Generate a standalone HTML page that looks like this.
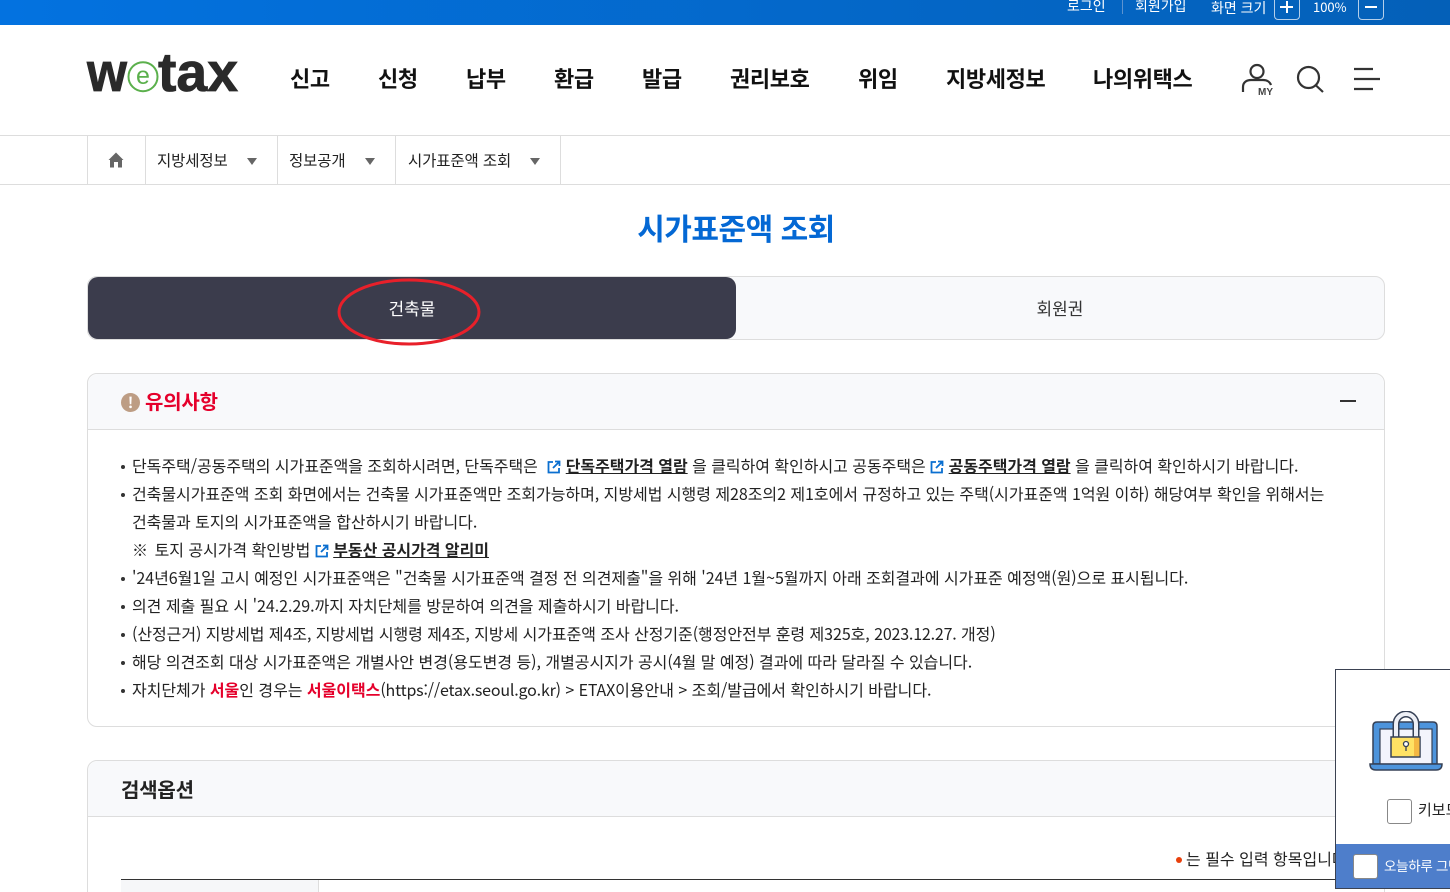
<!DOCTYPE html>
<html lang="ko"><head><meta charset="utf-8"><title>시가표준액 조회</title>
<style>
html,body{margin:0;padding:0;background:#fff;height:892px;overflow:hidden}
body{width:1450px;position:relative;font-family:"Noto Sans CJK KR","Liberation Sans",sans-serif;color:#222}
.a{position:absolute;white-space:nowrap}
.nav{top:63px;font-size:22px;line-height:30px;font-weight:700;color:#111;letter-spacing:-.35px}
.top{color:#fff;font-size:14px;line-height:16px}
.bc{top:150px;font-size:15.500px;line-height:20px;color:#222;letter-spacing:-.12px}
.tri{position:absolute;top:158px;width:0;height:0;border-left:5.500px solid transparent;border-right:5.500px solid transparent;border-top:7px solid #666}
.v{position:absolute;top:136px;height:48px;width:1px;background:#ddd}
.l{left:132px;font-size:16px;line-height:28px;color:#222;letter-spacing:-.035px}
.d{position:absolute;left:121px;width:4px;height:4px;border-radius:50%;background:#333}
b.u{text-decoration:underline;font-weight:700;color:#222}
b.r{color:#e5002b}
.n{letter-spacing:-.18px}
</style></head><body>
<div class="a" style="left:0;top:0;width:1450px;height:25px;background:linear-gradient(90deg,#0372e0,#0460b8)"></div>
<div class="a top" style="left:1067px;top:-2px">로그인</div>
<div class="a" style="left:1122px;top:0;width:1px;height:14px;background:#5d93d0"></div>
<div class="a top" style="left:1135px;top:-2px">회원가입</div>
<div class="a top" style="left:1211px;top:0">화면 크기</div>
<div class="a" style="left:1274px;top:-4px;width:24px;height:22px;border:1px solid #b5cfea;border-radius:4px"></div>
<div class="a" style="left:1280px;top:6px;width:13px;height:2px;background:#fff"></div>
<div class="a" style="left:1286px;top:1px;width:2px;height:12px;background:#fff"></div>
<div class="a top" style="left:1313px;top:-1px;font-size:13px">100%</div>
<div class="a" style="left:1358px;top:-4px;width:24px;height:22px;border:1px solid #b5cfea;border-radius:4px"></div>
<div class="a" style="left:1365px;top:6px;width:12px;height:2px;background:#fff"></div>

<svg class="a" style="left:86px;top:54px" width="154" height="40" viewBox="0 0 154 40">
<text x="1" y="37" font-family="Liberation Sans" font-weight="700" font-size="55" fill="#2a2a2a" stroke="#2a2a2a" stroke-width=".8" textLength="40" lengthAdjust="spacingAndGlyphs">w</text>
<circle cx="57" cy="22.700" r="14.500" fill="#fff" stroke="#5bb04c" stroke-width="2"/>
<text x="57" y="30" text-anchor="middle" font-family="Liberation Sans" font-size="25" fill="#5bb04c">e</text>
<text x="72" y="37" font-family="Liberation Sans" font-weight="700" font-size="55" fill="#2a2a2a" textLength="80" lengthAdjust="spacingAndGlyphs" stroke="#2a2a2a" stroke-width=".8">tax</text>
</svg>

<div class="a nav" style="left:290px">신고</div>
<div class="a nav" style="left:378px">신청</div>
<div class="a nav" style="left:466px">납부</div>
<div class="a nav" style="left:554px">환급</div>
<div class="a nav" style="left:642px">발급</div>
<div class="a nav" style="left:730px">권리보호</div>
<div class="a nav" style="left:858px">위임</div>
<div class="a nav" style="left:946px">지방세정보</div>
<div class="a nav" style="left:1093px">나의위택스</div>

<svg class="a" style="left:1238px;top:60px" width="150" height="38" viewBox="0 0 150 38" fill="none" stroke="#333" stroke-width="2.200">
<circle cx="19" cy="11.500" r="6.500"/>
<path d="M5 32v-5c0-5 4-7 8-7h12c4 0 7 2 8 5"/>
<text x="20" y="35" font-family="Liberation Sans" font-size="10" font-weight="700" fill="#444" stroke="none">MY</text>
<circle cx="70.500" cy="17.500" r="10.500"/><path d="M77.500 25l7.500 7"/>
<path d="M116 9h19M116 19h26M116 29h19"/>
</svg>

<div class="a" style="left:0;top:135px;width:1450px;height:1px;background:#ddd"></div>
<div class="a" style="left:0;top:184px;width:1450px;height:1px;background:#ddd"></div>
<div class="v" style="left:87px"></div><div class="v" style="left:145px"></div><div class="v" style="left:277px"></div><div class="v" style="left:395px"></div><div class="v" style="left:560px"></div>
<svg class="a" style="left:108px;top:152px" width="16" height="16" viewBox="0 0 16 16"><path d="M8 .5L.5 8H2v7.500h4V10h4v5.500h4V8h1.500z" fill="#666"/></svg>
<div class="a bc" style="left:157px">지방세정보</div><div class="tri" style="left:247px"></div>
<div class="a bc" style="left:289px">정보공개</div><div class="tri" style="left:365px"></div>
<div class="a bc" style="left:408px">시가표준액 조회</div><div class="tri" style="left:530px"></div>

<div class="a" style="left:0;width:1472px;top:206px;text-align:center;font-size:30px;line-height:42px;font-weight:700;color:#0468d4;letter-spacing:-.5px">시가표준액 조회</div>

<div class="a" style="left:87px;top:276px;width:1296px;height:62px;border:1px solid #ddd;border-radius:10px;background:#f8f9fb"></div>
<div class="a" style="left:88px;top:277px;width:648px;height:62px;border-radius:10px;background:#3b3c4c"></div>
<div class="a" style="left:88px;width:648px;top:296px;text-align:center;color:#fff;font-size:17px;line-height:24px">건축물</div>
<div class="a" style="left:736px;width:648px;top:296px;text-align:center;color:#333;font-size:17px;line-height:24px">회원권</div>
<svg class="a" style="left:330px;top:272px" width="160" height="80"><ellipse cx="79" cy="40" rx="70" ry="32" fill="none" stroke="#e8202a" stroke-width="3"/></svg>

<div class="a" style="left:87px;top:373px;width:1296px;height:352px;border:1px solid #ddd;border-radius:10px;background:#fff"></div>
<div class="a" style="left:88px;top:374px;width:1296px;height:55px;border-bottom:1px solid #ddd;border-radius:10px 10px 0 0;background:#f8f9fb"></div>
<div class="a" style="left:121px;top:393px;width:19px;height:19px;border-radius:50%;background:#bd9d84;color:#fff;text-align:center;font-size:15px;line-height:19px;font-weight:700">!</div>
<div class="a" style="left:145px;top:386px;font-size:20px;line-height:29px;font-weight:700;color:#e5002b;letter-spacing:-.2px">유의사항</div>
<div class="a" style="left:1340px;top:400px;width:16px;height:2px;background:#333"></div>

<i class="d" style="top:465px"></i>
<div class="a l" style="top:451px">단독주택/공동주택의 시가표준액을 조회하시려면, 단독주택은 <svg width="14" height="14" viewBox="0 0 14 14" fill="none" stroke="#0a6fd0" stroke-width="1.800" style="vertical-align:-2px;margin:0 0 0 5px"><path d="M6 2H1.500v10.500H12V8M8 1.500h4.500V6M12.500 1.500L6 8"/></svg> <b class="u">단독주택가격 열람</b> 을 클릭하여 확인하시고 공동주택은 <svg width="14" height="14" viewBox="0 0 14 14" fill="none" stroke="#0a6fd0" stroke-width="1.800" style="vertical-align:-2px"><path d="M6 2H1.500v10.500H12V8M8 1.500h4.500V6M12.500 1.500L6 8"/></svg> <b class="u">공동주택가격 열람</b> 을 클릭하여 확인하시기 바랍니다.</div>
<i class="d" style="top:493px"></i>
<div class="a l" style="top:479px">건축물시가표준액 조회 화면에서는 건축물 시가표준액만 조회가능하며, 지방세법 시행령 제28조의2 제1호에서 규정하고 있는 주택(시가표준액 1억원 이하) 해당여부 확인을 위해서는</div>
<div class="a l" style="top:507px">건축물과 토지의 시가표준액을 합산하시기 바랍니다.</div>
<div class="a l" style="top:535px"><span style="letter-spacing:-.800px">※&nbsp; </span>토지 공시가격 확인방법 <svg width="14" height="14" viewBox="0 0 14 14" fill="none" stroke="#0a6fd0" stroke-width="1.800" style="vertical-align:-2px"><path d="M6 2H1.500v10.500H12V8M8 1.500h4.500V6M12.500 1.500L6 8"/></svg> <b class="u">부동산 공시가격 알리미</b></div>
<i class="d" style="top:577px"></i>
<div class="a l" style="top:563px">'24년6월1일 고시 예정인 시가표준액은 "건축물 시가표준액 결정 전 의견제출"을 위해 '24년 1월~5월까지 아래 조회결과에 시가표준 예정액(원)으로 표시됩니다.</div>
<i class="d" style="top:605px"></i>
<div class="a l" style="top:591px">의견 제출 필요 시 '24.2.29.까지 자치단체를 방문하여 의견을 제출하시기 바랍니다.</div>
<i class="d" style="top:633px"></i>
<div class="a l" style="top:619px;letter-spacing:-.06px">(산정근거) 지방세법 제4조, 지방세법 시행령 제4조, 지방세 시가표준액 조사 산정기준(행정안전부 훈령 제325호, <span class="n">2023.12.27.</span> 개정)</div>
<i class="d" style="top:661px"></i>
<div class="a l" style="top:647px">해당 의견조회 대상 시가표준액은 개별사안 변경(용도변경 등), 개별공시지가 공시(4월 말 예정) 결과에 따라 달라질 수 있습니다.</div>
<i class="d" style="top:689px"></i>
<div class="a l" style="top:675px">자치단체가 <b class="r">서울</b>인 경우는 <b class="r">서울이택스</b><span class="n">(https://etax.seoul.go.kr)</span> &gt; <span class="n">ETAX</span>이용안내 &gt; 조회/발급에서 확인하시기 바랍니다.</div>

<div class="a" style="left:87px;top:760px;width:1296px;height:140px;border:1px solid #ddd;border-radius:10px 10px 0 0;background:#fff"></div>
<div class="a" style="left:88px;top:761px;width:1296px;height:55px;border-bottom:1px solid #ddd;border-radius:10px 10px 0 0;background:#f8f9fb"></div>
<div class="a" style="left:121px;top:774px;font-size:20px;line-height:29px;font-weight:700;color:#222;letter-spacing:-.2px">검색옵션</div>
<div class="a" style="left:1176px;top:857px;width:6px;height:6px;border-radius:50%;background:#e8400c"></div>
<div class="a" style="left:1186px;top:847px;font-size:16px;line-height:22px;color:#222">는 필수 입력 항목입니다.</div>
<div class="a" style="left:121px;top:879px;width:1230px;height:1px;background:#333"></div>
<div class="a" style="left:121px;top:880px;width:197px;height:12px;background:#f6f7f9;border-right:1px solid #ddd"></div>

<div class="a" style="left:1335px;top:669px;width:130px;height:218px;border:1px solid #3b4252;background:#fff;overflow:hidden">
<svg style="position:absolute;left:33px;top:41px" width="76" height="62" viewBox="0 0 76 62">
<path d="M4 53V15q0-4 4-4h56q4 0 4 4v38z" fill="#4d94dc" stroke="#364156" stroke-width="1.500"/>
<rect x="11" y="18" width="52" height="35" fill="#f3f4fc" stroke="#364156" stroke-width="1.200"/>
<path d="M1 53h72q0 6-6 6H7q-6 0-6-6z" fill="#4d94dc" stroke="#364156" stroke-width="1.500"/>
<path d="M27 26V13a10 10 0 0 1 20 0v13" fill="none" stroke="#364156" stroke-width="7"/>
<path d="M27 26V13a10 10 0 0 1 20 0v13" fill="none" stroke="#eef0f6" stroke-width="4"/>
<rect x="22" y="26" width="29" height="20" fill="#ffe264" stroke="#364156" stroke-width="1.500"/>
<rect x="45" y="27" width="5.500" height="18" fill="#f5b843"/>
<circle cx="37" cy="33" r="2.500" fill="#fff" stroke="#364156" stroke-width="1.300"/><path d="M37 35v5" stroke="#364156" stroke-width="1.300"/>
</svg>
<div class="a" style="left:51px;top:129px;width:23px;height:23px;border:1px solid #888;border-radius:3px;background:#fff"></div>
<div class="a" style="left:82px;top:130px;font-size:15px;line-height:20px;color:#222">키보드 보안</div>
<div class="a" style="left:0;top:174px;width:130px;height:44px;background:#4e7ecb"></div>
<div class="a" style="left:17px;top:184px;width:23px;height:23px;border:1px solid #888;border-radius:3px;background:#fff"></div>
<div class="a" style="left:48px;top:186px;font-size:13.500px;line-height:18px;color:#fff;letter-spacing:-.3px">오늘하루 그만보기</div>
</div>
</body></html>
